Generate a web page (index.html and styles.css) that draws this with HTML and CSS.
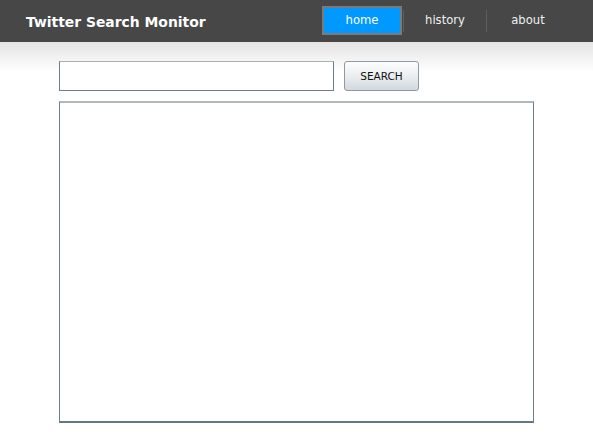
FILE: index.html
```html
<!DOCTYPE html>
<html>
<head>
<meta charset="utf-8">
<link rel="stylesheet" href="styles.css">
</head>
<body>
<header class="topbar">
  <div class="title">Twitter Search Monitor</div>
  <nav class="nav">
    <a class="nav-item active">home</a>
    <span class="sep"></span>
    <a class="nav-item">history</a>
    <span class="sep"></span>
    <a class="nav-item">about</a>
  </nav>
</header>
<div class="shade"></div>
<main class="main">
  <div class="search-row">
    <input class="search-input" type="text">
    <button class="search-btn">SEARCH</button>
  </div>
  <div class="results"></div>
</main>
</body>
</html>
```

FILE: styles.css
```css
html, body {
  margin: 0;
  padding: 0;
  background: #ffffff;
}
body {
  font-family: "DejaVu Sans", Verdana, sans-serif;
}
.topbar {
  height: 42px;
  background: #474747;
  display: flex;
  align-items: center;
  justify-content: space-between;
  padding: 0 25px 0 26px;
}
.title {
  color: #ffffff;
  font-weight: bold;
  font-size: 13.9px;
  padding-top: 1px;
}
.nav {
  display: flex;
  align-items: center;
  height: 42px;
}
.nav-item {
  width: 76px;
  height: 25px;
  line-height: 25px;
  text-align: center;
  color: #f0f0f0;
  font-size: 11.6px;
  border: 2px solid transparent;
  margin: 0 0 1px;
}
.nav-item.active {
  background: #0099ff;
  border-color: #7a7a7a;
  color: #ffffff;
}
.sep {
  width: 1px;
  height: 22px;
  background: #5e5e5e;
  margin: 0 1px;
}
.shade {
  height: 30px;
  background: linear-gradient(#e4e4e4, #ffffff);
}
.main {
  margin: -11px 0 0 59px;
  width: 475px;
}
.search-row {
  display: flex;
  gap: 10px;
}
.search-input {
  box-sizing: border-box;
  width: 275px;
  height: 30px;
  margin: 0;
  border: 1px solid #6f7f8a;
  border-top-color: #a9b0b5;
  background: #fff;
  outline: none;
}
.search-btn {
  box-sizing: border-box;
  width: 75px;
  height: 30px;
  margin: 0;
  border: 1px solid #8e9aa3;
  border-radius: 3px;
  background: linear-gradient(#fdfdfd, #e9ecef 55%, #d3d8dd);
  font-family: "DejaVu Sans", Tahoma, sans-serif;
  font-size: 10.5px;
  color: #111;
  padding: 0;
}
.results {
  box-sizing: border-box;
  margin-top: 10px;
  height: 322px;
  border: 1px solid #6f7f8a;
  border-top: 2px solid #b3b8bc;
  border-bottom: 2px solid #66767f;
}
```
